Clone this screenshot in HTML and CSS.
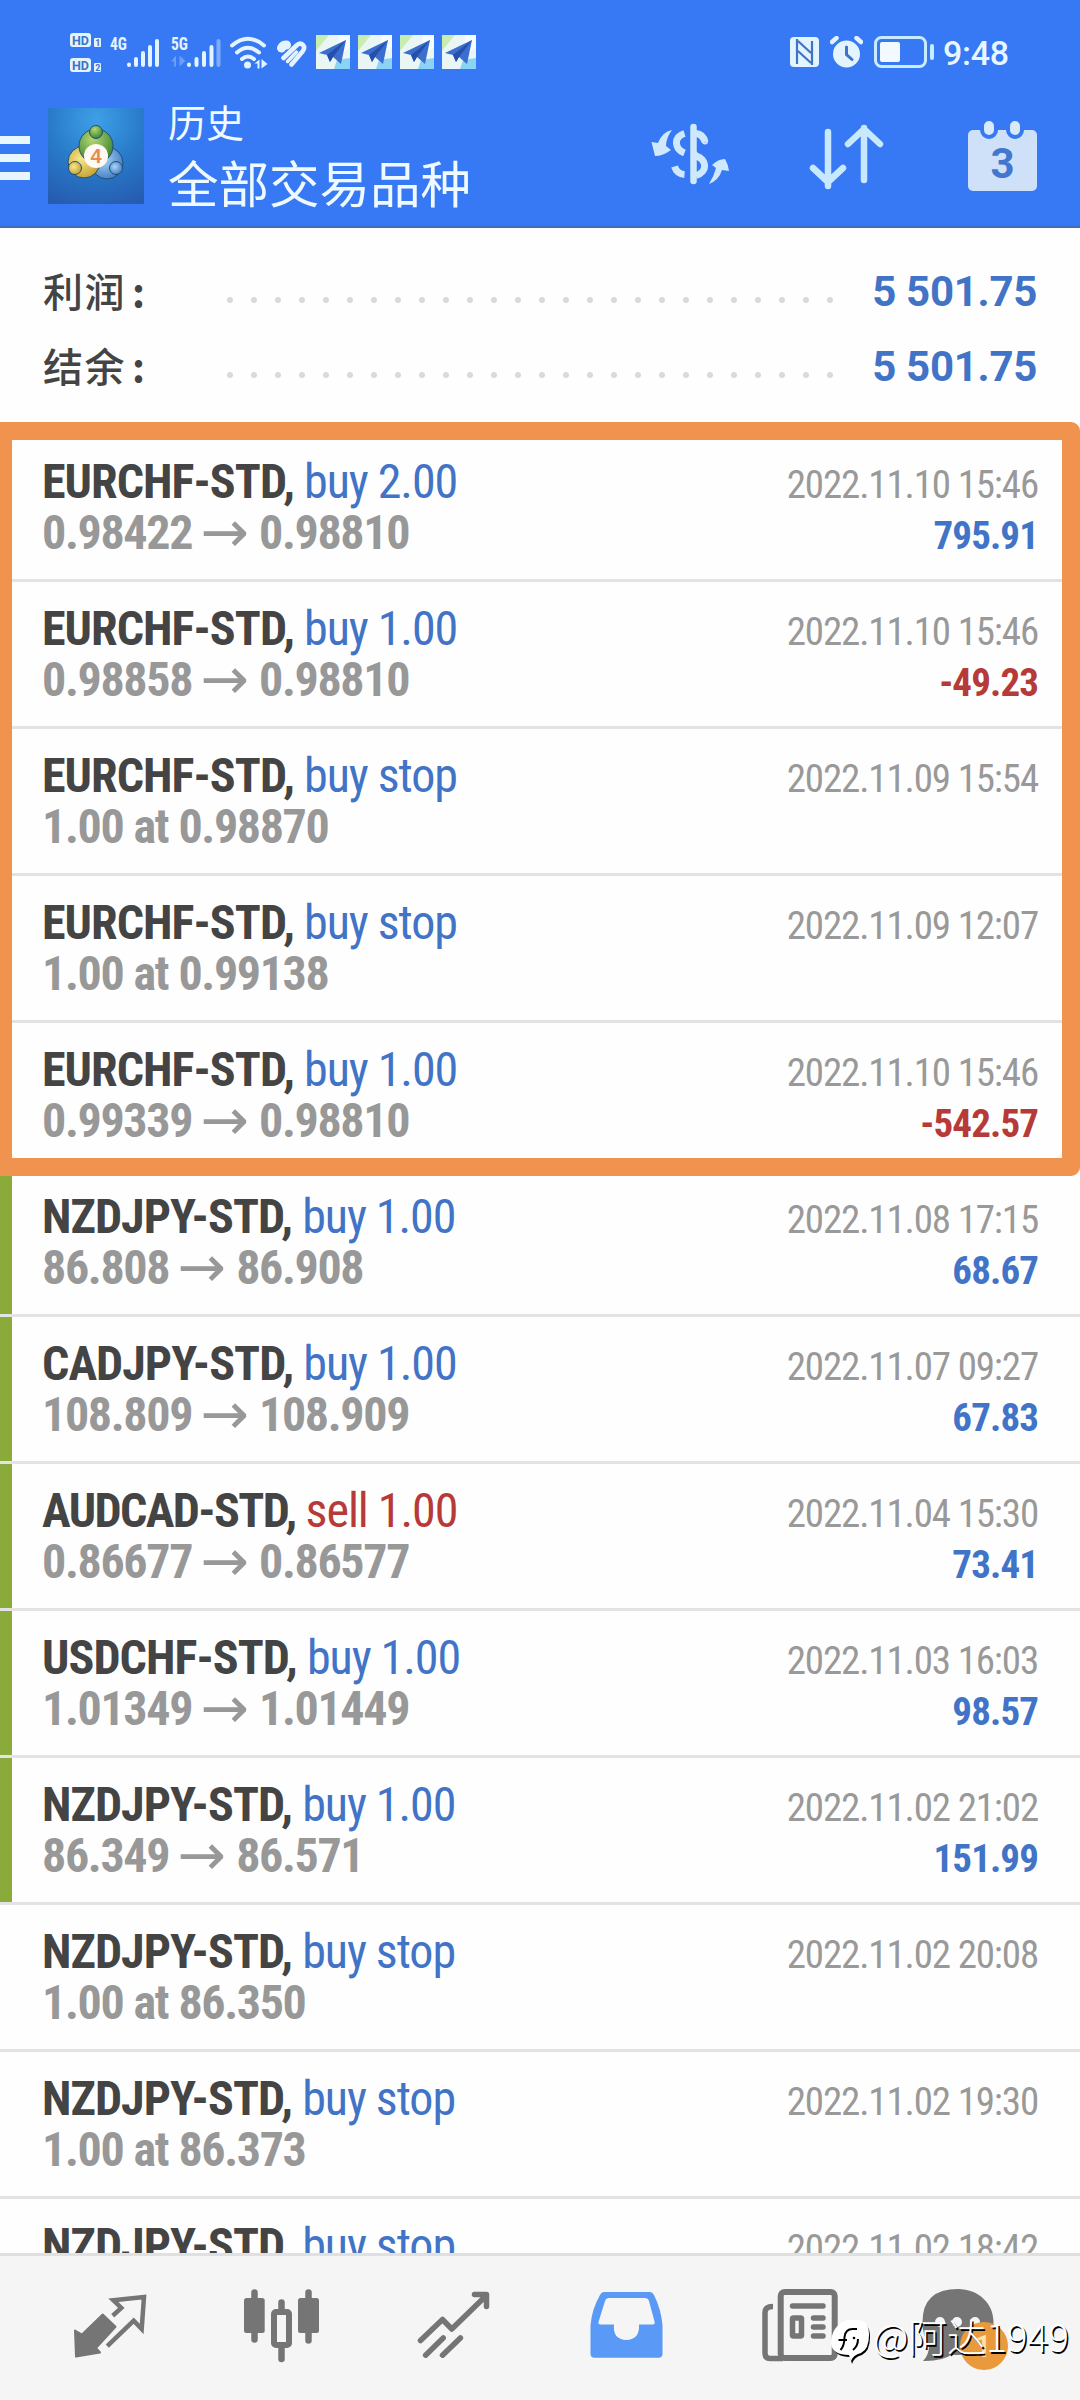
FILE: index.html
```html
<!DOCTYPE html>
<html lang="zh">
<head>
<meta charset="utf-8">
<title>历史</title>
<link rel="stylesheet" href="styles.css">
</head>
<body>
<svg class="defs" width="0" height="0" aria-hidden="true">
  <defs>
    <symbol id="plane" viewBox="0 0 34 34">
      <rect width="34" height="34" fill="#eaf6f4"/>
      <path d="M0 0h13L0 16z" fill="#c9ecb0"/>
      <path d="M23 0h11v12L22 22z" fill="#f6fbff"/>
      <path d="M18 34l3-9 13-2v11z" fill="#8bd3f6"/>
      <path d="M30 5L3 18l8 2 3 7 3-5 8 7z" fill="#3a6fd0"/>
      <path d="M30 5L11 20l3 7 3-5z" fill="#254fa8"/>
    </symbol>
  </defs>
</svg>
<div class="screen">
  <header class="header">
    <div class="status">
      <svg class="st-hd" width="32" height="40" viewBox="0 0 32 40">
        <g fill="#e4f4ff"><rect width="21" height="14" rx="3"/><rect x="24" y="5" width="7" height="9" rx="1"/><rect y="25" width="21" height="14" rx="3"/><rect x="24" y="30" width="7" height="9" rx="1"/></g>
        <g class="hd-text"><text x="2" y="11.5" textLength="17" lengthAdjust="spacingAndGlyphs">HD</text><text x="2" y="36.5" textLength="17" lengthAdjust="spacingAndGlyphs">HD</text></g>
        <g class="hd-num"><text x="25.3" y="12.6">1</text><text x="25.3" y="37.6">2</text></g>
      </svg>
      <svg class="st-4g" width="50" height="34" viewBox="0 0 50 34">
        <text class="net" x="0" y="15" textLength="17" lengthAdjust="spacingAndGlyphs">4G</text>
        <g stroke="#e4f4ff" stroke-width="4" stroke-linecap="round"><path d="M19 29.500v.5M26 24v6M33 18v12M40 12v18M47 6v24"/></g>
      </svg>
      <svg class="st-5g" width="51" height="34" viewBox="0 0 51 34">
        <text class="net" x="0" y="15" textLength="17" lengthAdjust="spacingAndGlyphs">5G</text>
        <path d="M0 26.500l5-6v11h-2v-5zM8.500 20.500v11l6-5.500z" fill="#6c9df7"/>
        <g stroke="#e4f4ff" stroke-width="4" stroke-linecap="round"><path d="M18 29.500v.5M25.500 24v6M33 18v12M40.500 12v18"/><path d="M47.500 6v24" stroke="#7fabf8"/></g>
      </svg>
      <svg class="st-wifi" width="38" height="34" viewBox="0 0 38 34">
        <g fill="none" stroke="#e4f4ff" stroke-width="4" stroke-linecap="round"><path d="M2 9.500Q18 -4 34 9.500"/><path d="M7 16.500Q18 7 29 16.500"/><path d="M12 23Q18 18 24 23"/></g>
        <circle cx="17.500" cy="29" r="3.500" fill="#e4f4ff"/>
        <path d="M24.500 27.500l5-4v9h-2v-5zM31.500 23v9.500l6-4.500z" fill="#e4f4ff"/>
      </svg>
      <svg class="st-heart" width="31" height="29" viewBox="0 0 31 29">
        <g fill="none" stroke="#e4f4ff" stroke-linecap="round"><path d="M5.500 8Q7 5 10.500 5" stroke-width="9"/><path d="M7.500 18L20.500 5.500Q24 2 27 5Q29.500 8 26.500 11.500L15.500 24.500" stroke-width="4.600"/><path d="M11.500 21.500L20.500 12" stroke-width="3.500"/></g>
      </svg>
      <div class="planes">
        <svg width="34" height="34"><use href="#plane"/></svg>
        <svg width="34" height="34"><use href="#plane"/></svg>
        <svg width="34" height="34"><use href="#plane"/></svg>
        <svg width="34" height="34"><use href="#plane"/></svg>
      </div>
      <div class="status-right">
        <svg width="29" height="30" viewBox="0 0 29 30">
          <rect width="29" height="30" rx="4" fill="#e4f4ff"/>
          <path d="M7 2v25M22 28V4M8 4l13 12M8 14l13 12" stroke="#3f73c8" stroke-width="2.200" fill="none"/>
        </svg>
        <svg width="33" height="32" viewBox="0 0 33 32">
          <circle cx="16.500" cy="18" r="13.500" fill="#e4f4ff"/>
          <path d="M2 6l4.500-4M31 6l-4.500-4" stroke="#e4f4ff" stroke-width="4.500" stroke-linecap="round"/>
          <path d="M16.500 11v7.500l5.500 5" stroke="#3f73c8" stroke-width="3" fill="none" stroke-linecap="round"/>
        </svg>
        <svg width="60" height="32" viewBox="0 0 60 32">
          <rect x="1.500" y="1.500" width="50" height="29" rx="6" fill="none" stroke="#c8ecff" stroke-width="3"/>
          <rect x="6" y="6" width="20" height="20" rx="2" fill="#f2faff"/>
          <rect x="56" y="8" width="4" height="16" rx="2" fill="#c8ecff"/>
        </svg>
        <span class="time">9:48</span>
      </div>
    </div>
    <div class="appbar">
      <svg class="menu" width="30" height="44" viewBox="0 0 30 44"><path d="M0 4h30M0 22h30M0 40h30" stroke="#e8f7fd" stroke-width="8"/></svg>
      <svg class="logo" width="96" height="96" viewBox="0 0 96 96">
        <defs>
          <radialGradient id="bg" cx=".5" cy=".12" r=".95"><stop offset="0" stop-color="#3da0e6"/><stop offset=".55" stop-color="#2878c8"/><stop offset="1" stop-color="#265cb0"/></radialGradient>
          <radialGradient id="gr" cx=".4" cy=".3" r=".8"><stop offset="0" stop-color="#b4d870"/><stop offset="1" stop-color="#2f7a2c"/></radialGradient>
          <radialGradient id="ye" cx=".4" cy=".4" r=".8"><stop offset="0" stop-color="#f6e88a"/><stop offset="1" stop-color="#b98f1f"/></radialGradient>
          <radialGradient id="bl" cx=".4" cy=".4" r=".8"><stop offset="0" stop-color="#a9d6f8"/><stop offset="1" stop-color="#2a66b4"/></radialGradient>
        </defs>
        <rect width="96" height="96" fill="url(#bg)"/>
        <g stroke="#1f4f74" stroke-width="1">
          <circle cx="59" cy="55" r="16" fill="url(#bl)"/>
          <circle cx="36" cy="54" r="16" fill="url(#ye)"/>
          <circle cx="48" cy="38" r="17" fill="url(#gr)"/>
          <circle cx="48" cy="24" r="6.500" fill="url(#gr)"/>
          <circle cx="27" cy="60" r="6.500" fill="url(#ye)"/>
          <circle cx="68" cy="60" r="6.500" fill="url(#bl)"/>
        </g>
        <circle cx="48" cy="48" r="12" fill="#fffaf2"/>
        <text class="logo-num" x="48" y="55" text-anchor="middle">4</text>
      </svg>
      <div class="titles"><div class="title-sm">历史</div><div class="title-lg">全部交易品种</div></div>
      <div class="actions">
        <svg width="80" height="72" viewBox="0 0 80 72">
          <g fill="none" stroke="#cfe8fb">
            <path d="M42.500 7v54" stroke-width="6.500" stroke-linecap="round"/>
            <path d="M33.500 13.500C22 17 23.500 29 33.500 33M23.500 46.500Q26 54 33.500 54.500M45 13.500Q52 14 54 22M45 36C56 39 57 52 45 55.500" stroke-width="7"/>
            <path d="M45 35l-3-2" stroke-width="6"/>
            <circle cx="54" cy="21.500" r="1" stroke-width="4"/>
          </g>
          <path d="M21 10Q11 12 7 23L.500 22 4 36q8 0 16-6l-5-4Q15 18 21 10zM58 64Q68 60 71 50l7 1Q77 44 74 39q-7 0-13 6l4 3Q63 56 58 64z" fill="#cfe8fb"/>
        </svg>
        <svg width="76" height="72" viewBox="0 0 76 72">
          <path d="M19 12v54M4 48l15 14 15-14M55 60V8M39 24L55 9l16 15" fill="none" stroke="#c8e9fd" stroke-width="6.500" stroke-linecap="round" stroke-linejoin="round"/>
        </svg>
        <svg width="69" height="72" viewBox="0 0 69 72">
          <rect y="10" width="69" height="61" rx="5" fill="#cfe1f8"/>
          <g fill="#d6eafc" stroke="#3878f2" stroke-width="4"><rect x="14" y="-1" width="14" height="18" rx="7"/><rect x="40" y="-1" width="14" height="18" rx="7"/></g>
          <text class="cal-num" x="34.500" y="58" text-anchor="middle">3</text>
        </svg>
      </div>
    </div>
  </header>

  <section class="summary">
    <div class="sum-row"><span class="sum-label">利润<span class="colon">:</span></span><span class="dots"></span><span class="sum-value">5 501.75</span></div>
    <div class="sum-row"><span class="sum-label">结余<span class="colon">:</span></span><span class="dots"></span><span class="sum-value">5 501.75</span></div>
  </section>

  <main class="list">
    <div class="highlight"></div>
    <div class="row"><div class="deal"><div class="name"><b>EURCHF-STD,</b> <span class="buy">buy 2.00</span></div><div class="price">0.98422<i>→</i>0.98810</div></div><div class="meta"><div class="date">2022.11.10 15:46</div><div class="profit">795.91</div></div></div>
    <div class="row"><div class="deal"><div class="name"><b>EURCHF-STD,</b> <span class="buy">buy 1.00</span></div><div class="price">0.98858<i>→</i>0.98810</div></div><div class="meta"><div class="date">2022.11.10 15:46</div><div class="profit loss">-49.23</div></div></div>
    <div class="row"><div class="deal"><div class="name"><b>EURCHF-STD,</b> <span class="buy">buy stop</span></div><div class="price">1.00 at 0.98870</div></div><div class="meta"><div class="date">2022.11.09 15:54</div></div></div>
    <div class="row"><div class="deal"><div class="name"><b>EURCHF-STD,</b> <span class="buy">buy stop</span></div><div class="price">1.00 at 0.99138</div></div><div class="meta"><div class="date">2022.11.09 12:07</div></div></div>
    <div class="row"><div class="deal"><div class="name"><b>EURCHF-STD,</b> <span class="buy">buy 1.00</span></div><div class="price">0.99339<i>→</i>0.98810</div></div><div class="meta"><div class="date">2022.11.10 15:46</div><div class="profit loss">-542.57</div></div></div>
    <div class="row tp"><div class="deal"><div class="name"><b>NZDJPY-STD,</b> <span class="buy">buy 1.00</span></div><div class="price">86.808<i>→</i>86.908</div></div><div class="meta"><div class="date">2022.11.08 17:15</div><div class="profit">68.67</div></div></div>
    <div class="row tp"><div class="deal"><div class="name"><b>CADJPY-STD,</b> <span class="buy">buy 1.00</span></div><div class="price">108.809<i>→</i>108.909</div></div><div class="meta"><div class="date">2022.11.07 09:27</div><div class="profit">67.83</div></div></div>
    <div class="row tp"><div class="deal"><div class="name"><b class="wide">AUDCAD-STD,</b> <span class="sell">sell 1.00</span></div><div class="price">0.86677<i>→</i>0.86577</div></div><div class="meta"><div class="date">2022.11.04 15:30</div><div class="profit">73.41</div></div></div>
    <div class="row tp"><div class="deal"><div class="name"><b>USDCHF-STD,</b> <span class="buy">buy 1.00</span></div><div class="price">1.01349<i>→</i>1.01449</div></div><div class="meta"><div class="date">2022.11.03 16:03</div><div class="profit">98.57</div></div></div>
    <div class="row tp"><div class="deal"><div class="name"><b>NZDJPY-STD,</b> <span class="buy">buy 1.00</span></div><div class="price">86.349<i>→</i>86.571</div></div><div class="meta"><div class="date">2022.11.02 21:02</div><div class="profit">151.99</div></div></div>
    <div class="row"><div class="deal"><div class="name"><b>NZDJPY-STD,</b> <span class="buy">buy stop</span></div><div class="price">1.00 at 86.350</div></div><div class="meta"><div class="date">2022.11.02 20:08</div></div></div>
    <div class="row"><div class="deal"><div class="name"><b>NZDJPY-STD,</b> <span class="buy">buy stop</span></div><div class="price">1.00 at 86.373</div></div><div class="meta"><div class="date">2022.11.02 19:30</div></div></div>
    <div class="row"><div class="deal"><div class="name"><b>NZDJPY-STD,</b> <span class="buy">buy stop</span></div></div><div class="meta"><div class="date">2022.11.02 18:42</div></div></div>
  </main>

  <nav class="nav">
    <svg viewBox="0 0 96 96">
      <path d="M13 54.500l7 4L40.700 38.500 53.500 50.700 34 72l4 4.500-24 4z" fill="#757575" stroke="#757575" stroke-width="2" stroke-linejoin="round"/>
      <path d="M50.700 39.700l8.600-7.700-8-7.800L82 21l-2.300 32-8-8.300-26.400 25.500" fill="none" stroke="#757575" stroke-width="4.500"/>
    </svg>
    <svg viewBox="0 0 96 96">
      <g fill="#757575"><rect x="10" y="22" width="20.700" height="35" rx="2.500"/><rect x="64" y="22" width="21" height="35" rx="2.500"/></g>
      <path d="M20.500 16.500v47M74.500 16.500v48M47.500 26.500v8M47.500 72v11" stroke="#757575" stroke-width="6.500" stroke-linecap="round"/>
      <rect x="40" y="36" width="15" height="33" rx="2" fill="none" stroke="#757575" stroke-width="6"/>
    </svg>
    <svg viewBox="0 0 96 96">
      <path d="M14.500 64.500l22-21 9.300 9.500 34-33M68.500 18.500h12v12M19.600 79.200l17.600-17.200M36.500 79.200l17.900-17.200" fill="none" stroke="#757575" stroke-width="5.500" stroke-linecap="round" stroke-linejoin="round"/>
    </svg>
    <svg viewBox="0 0 96 96">
      <path fill-rule="evenodd" fill="#5a99f5" d="M26 16h46q2.500 0 4 3 7 14 8.500 30v29q0 3.700-4 3.700H16.500q-4 0-4-3.700V49Q14 33 22 19q1.500-3 4-3zM31 22q-3 0-4 3l-6.500 21q-.5 2.500 2 2.500H36q-1.500 15 12.300 15.500Q62 63.500 61 48.500h13.500q3 0 2-3L71 25q-1-3-4-3z"/>
    </svg>
    <svg viewBox="0 0 96 96">
      <path d="M23 30.500q-8 0-8 6V77q0 5.500 5 5.500h13" fill="none" stroke="#757575" stroke-width="5.500"/>
      <rect x="30.700" y="16" width="54" height="66" rx="4" fill="none" stroke="#757575" stroke-width="6"/>
      <rect x="42.500" y="42" width="9" height="18" rx="1" fill="none" stroke="#757575" stroke-width="5.500"/>
      <path d="M42.500 30h30.500M63.500 42h9.500M63.500 51h9.500M63.500 60h9.500" stroke="#757575" stroke-width="5.500" stroke-linecap="round"/>
    </svg>
    <svg viewBox="0 0 96 96">
      <path d="M36 13c20 0 35.500 14 35.500 33S56 79 36 79q-3 0-6-.5Q20 85.500 1 85q6-6 6-15Q.500 60 .500 46 .500 13 36 13z" fill="#757575"/>
      <g fill="#f5f5f5"><circle cx="18" cy="46" r="5"/><circle cx="35" cy="46" r="5"/><circle cx="53" cy="46" r="5"/></g>
      <circle cx="62" cy="70" r="24" fill="#e99a3c"/>
      <text class="badge-num" x="61" y="81" text-anchor="middle">1</text>
    </svg>
  </nav>
  <div class="watermark">
    <svg width="42" height="48" viewBox="0 0 42 48">
      <path d="M19 4h10q10 2 10 15 0 14-8 18-8 2-10 9l-2-7Q4 39 2 28 2 12 19 4z" fill="#000"/>
      <path d="M16 2h12q10 1 10 15 0 14-8 18-8 2-10 8l-2-6Q2 37 0 26 0 8 16 2z" fill="#fff"/>
      <path d="M9.500 32q4-4 4-13 1-8 8-8h4.500M7.500 22h8.500M22 32q5-4 5-11" fill="none" stroke="#000" stroke-width="2"/>
      <circle cx="23" cy="20" r="1.300"/>
    </svg>
    <span>@阿达1949</span>
  </div>
</div>
</body>
</html>
```
FILE: styles.css
```css
* { box-sizing: border-box; }
body { margin: 0; background: #fefefe; font-family: Roboto, "Noto Sans CJK SC", sans-serif; }
svg { display: block; flex: none; }
.defs { position: absolute; }
.screen { position: relative; width: 1080px; height: 2400px; overflow: hidden; display: flex; flex-direction: column; }

.header { height: 228px; background: #3778f4; border-bottom: 2px solid #3d6dbb; }
.status { height: 104px; padding: 33px 70px 0; display: flex; align-items: flex-start; }
.st-4g { margin: 2px 0 0 8px; }
.st-5g { margin: 2px 0 0 11px; }
.st-wifi { margin: 3px 0 0 8px; }
.st-heart { margin: 7px 0 0 8px; }
.planes { display: flex; gap: 8px; margin: 2px 0 0 9px; }
.status-right { display: flex; align-items: center; margin: 2px 0 0 auto; height: 34px; gap: 11px; }
.time { font-size: 34px; line-height: 34px; font-weight: 500; color: #e8f7ff; width: 65px; white-space: nowrap; letter-spacing: -.3px; margin: 1px 2px 0 -2px; }
.net { font: 700 18.5px "Roboto Condensed"; fill: #e4f4ff; }
.hd-text { font: 700 13px Roboto; fill: #3f73c8; }
.hd-num { font: 700 9px Roboto; fill: #3f73c8; }

.appbar { height: 122px; display: flex; align-items: flex-start; padding-right: 43px; }
.menu { margin-top: 32px; }
.logo { margin: 4px 0 0 18px; }
.logo-num { font: 700 20px "Liberation Sans"; fill: #e88a52; }
.titles { margin: -4px 0 0 24px; color: #eefaff; font-family: "Noto Sans CJK SC", sans-serif; white-space: nowrap; }
.title-sm { font-size: 38px; line-height: 42px; height: 51px; }
.title-lg { font-size: 50.500px; line-height: 60px; font-weight: 400; }
.actions { margin: 16px 0 0 auto; display: flex; }
.actions svg:nth-child(2) { margin-left: 78px; }
.actions svg:nth-child(3) { margin-left: 83px; }
.cal-num { font: 700 42px Roboto; fill: #4377cf; }

.summary { height: 207px; padding: 26px 43px 0; }
.sum-row { height: 75px; display: flex; align-items: center; }
.sum-label { width: 184px; margin-top: -4px; font-size: 40px; font-weight: 500; letter-spacing: 1.500px; color: #444; font-family: "Noto Sans CJK SC", sans-serif; }
.colon { margin-left: 6px; font-weight: 700; }
.dots { width: 606px; height: 6px; margin-top: 16px; background: radial-gradient(circle at 3px 3px, #dadada 2.700px, transparent 3.300px) 0 0 / 24px 6px; }
.sum-value { margin-left: auto; font-size: 42px; font-weight: 700; letter-spacing: -.3px; color: #4173c6; white-space: nowrap; }

.list { position: relative; height: 1818px; font-family: "Roboto Condensed", sans-serif; }
.highlight { position: absolute; z-index: 1; left: -10px; top: -13px; width: 1090px; height: 754px; border: 18.500px solid #ef934f; border-left-width: 22px; border-radius: 9px; }
.row { height: 147px; border-bottom: 3px solid #e3e3e3; padding: 21px 42px 0; display: flex; justify-content: space-between; line-height: 51px; white-space: nowrap; }
.row:last-child { height: 54px; overflow: hidden; border: 0; }
.row.tp { background: linear-gradient(#8aaa39, #8aaa39) 0 0 / 12px 100% no-repeat; background-clip: padding-box; }
.name, .price { font-size: 48px; height: 51px; }
.name b { color: #444; letter-spacing: -.95px; }
.name b.wide { letter-spacing: -1.600px; }
.name span { margin-left: -1px; letter-spacing: -1.050px; }
.buy { color: #4173c6; }
.sell { color: #b63a38; }
.price { color: #989898; font-weight: 700; letter-spacing: -1.350px; word-spacing: .5px; }
.price i { display: inline-block; width: 68px; margin-left: -1px; text-align: center; font: 400 58px/51px "DejaVu Sans"; letter-spacing: 0; height: 51px; vertical-align: top; text-indent: -1px; }
.meta { padding-top: 4px; text-align: right; font-size: 39px; }
.date { color: #999; height: 51px; letter-spacing: -1.150px; }
.profit { font-weight: 700; color: #4173c6; letter-spacing: -.9px; }
.profit.loss { color: #b63a38; }

.nav { position: relative; height: 147px; background: #f5f5f5; border-top: 3px solid #e0e0e0; padding: 0 24px 8px; display: grid; grid-template-columns: repeat(6, 172px); justify-items: center; align-items: center; }
.nav svg { width: 96px; height: 96px; }
.badge-num { font: 500 31px Roboto; fill: #ffe3a8; }
.watermark { position: absolute; left: 831px; top: 2318px; display: flex; align-items: flex-start; color: #fff; }
.watermark span { margin-top: -5px; font: 300 38.800px/44px "Noto Sans CJK SC"; text-shadow: 1.500px 1.500px 0 #000; white-space: nowrap; }
```
